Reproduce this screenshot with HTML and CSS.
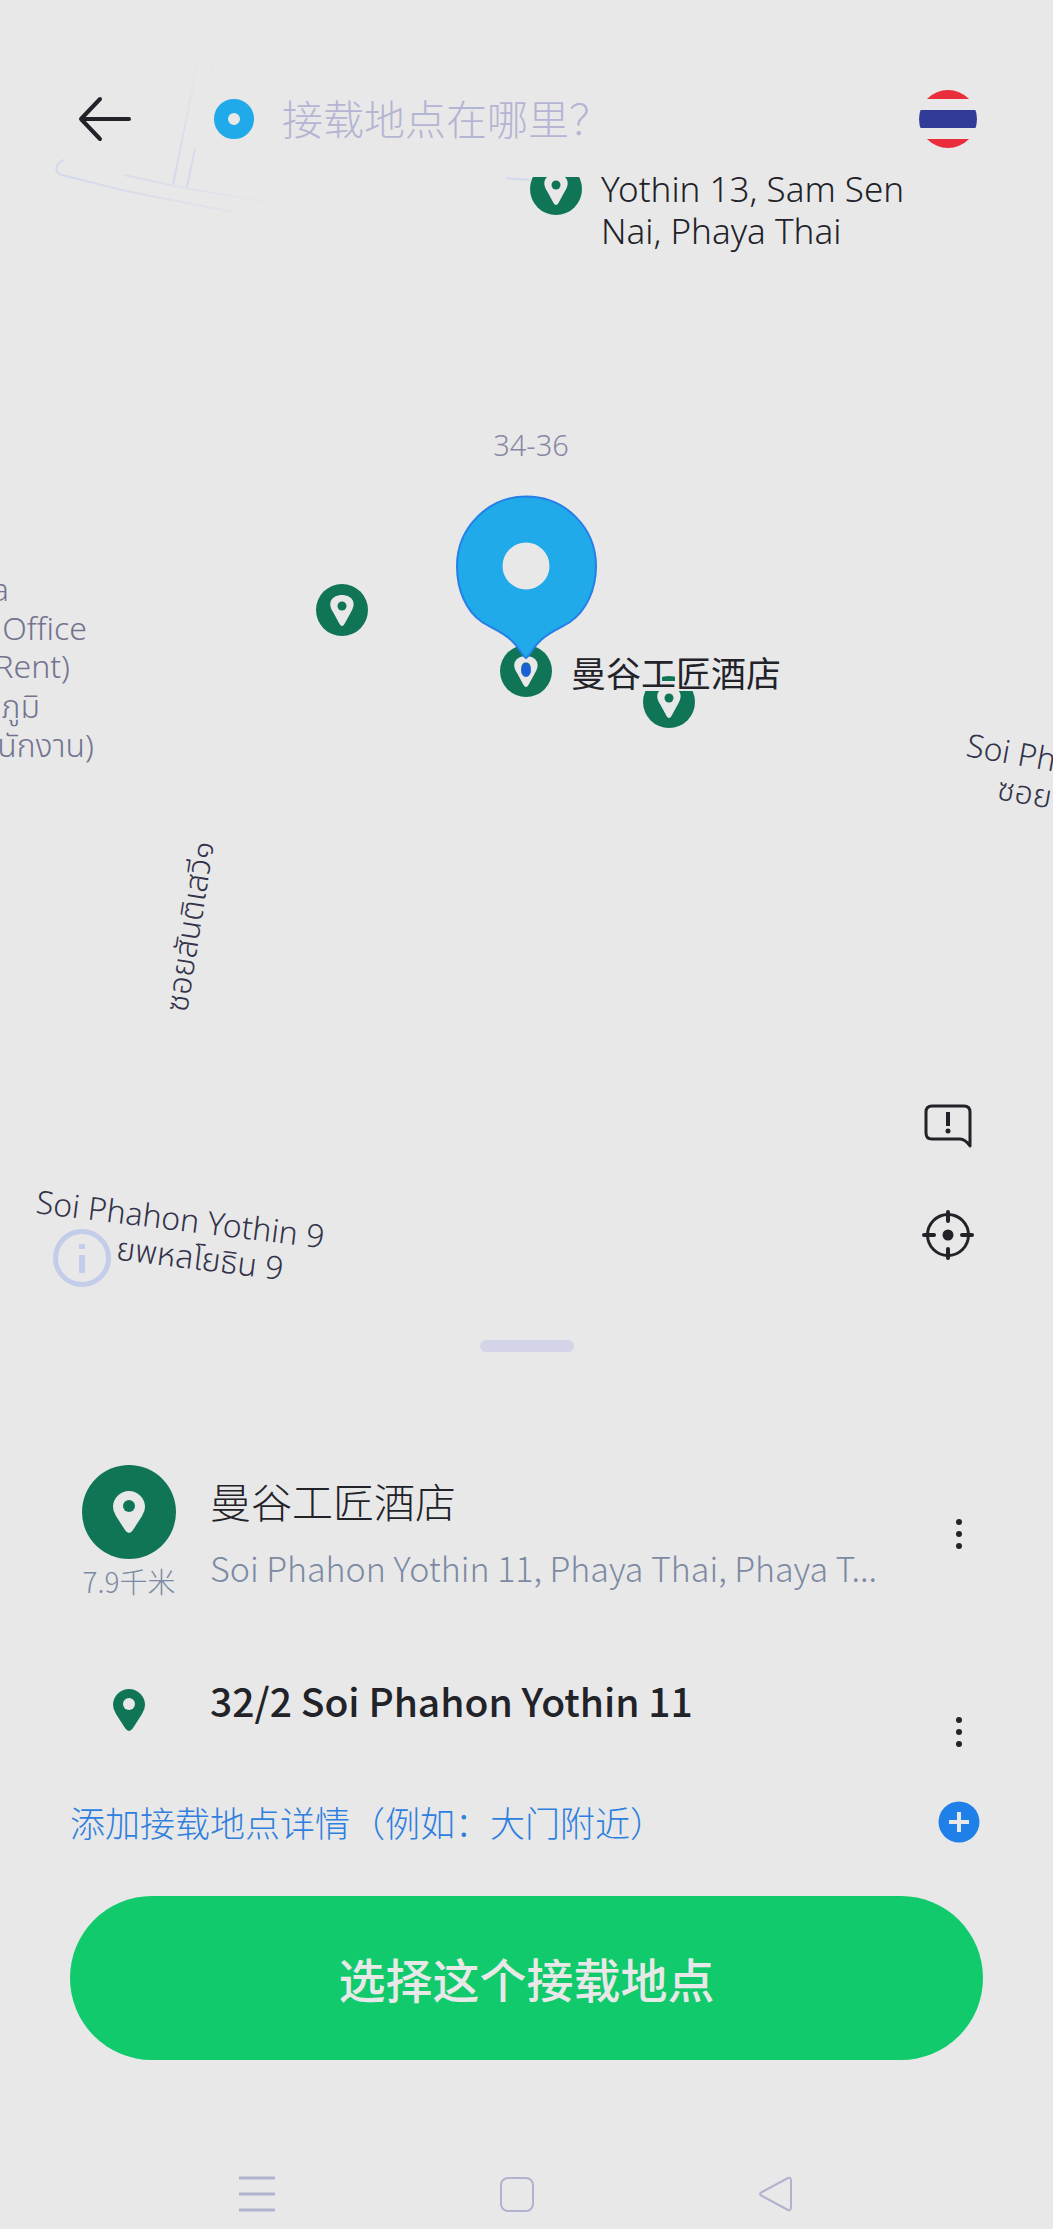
FILE: index.html
```html
<!DOCTYPE html>
<html lang="zh-CN">
<head>
  <meta charset="UTF-8">
  <meta name="viewport" content="width=device-width, initial-scale=1.0">
  <title>选择接载地点</title>
  <link rel="stylesheet" href="styles.css">
</head>
<body>

<section class="stage">
  <svg class="map" viewBox="0 0 1053 1300" preserveAspectRatio="xMidYMin slice">
    <defs>
      <g id="marker">
        <circle r="26" fill="#107556"/>
        <path d="M0 16C-1 16-2 15-3 13L-9 2C-16-9-8-15 0-15S16-9 9 2L3 13C2 15 1 16 0 16Z" fill="#e8e8e8"/>
        <circle cy="-4" r="4.500" fill="#107556"/>
      </g>
      <clipPath id="below-header"><rect x="0" y="177" width="1053" height="1123"/></clipPath>
      <clipPath id="below-label"><path d="M662 675h13v6h-13zM630 691h80v50h-80z"/></clipPath>
      <linearGradient id="fade" gradientUnits="userSpaceOnUse" x1="60" y1="0" x2="290" y2="0">
        <stop offset="0" stop-color="#d3d8ec"/>
        <stop offset="1" stop-color="#e8e8e8"/>
      </linearGradient>
      <linearGradient id="fade-up" gradientUnits="userSpaceOnUse" x1="0" y1="185" x2="0" y2="55">
        <stop offset="0" stop-color="#d3d8ec"/>
        <stop offset="1" stop-color="#e8e8e8"/>
      </linearGradient>
    </defs>

    <!-- roads -->
    <g class="roads">
      <path d="M198 56L194 80L173 185M195 148L187 187M214 57L211 71" stroke="url(#fade-up)"/>
      <path d="M64 160C56 162 53 173 62 175L126 191L233 212M124 175L180 187L320 212" stroke="url(#fade)"/>
      <path d="M506 178L530 180" stroke="#d3d8ec"/>
    </g>

    <g clip-path="url(#below-header)">
      <use href="#marker" x="556" y="189"/>
      <text class="place" x="601" y="202">Yothin 13, Sam Sen</text>
      <text class="place" x="601" y="244">Nai, Phaya Thai</text>
    </g>

    <text class="number" x="531" y="456" text-anchor="middle">34-36</text>

    <g class="area" text-anchor="end">
      <text x="9" y="601">a</text>
      <text x="87" y="640">Office</text>
      <text x="70" y="678">Rent)</text>
      <text x="40" y="718">ภูมิ</text>
      <text x="94" y="757">สำนักงาน)</text>
    </g>

    <g class="street">
      <text transform="translate(187 1013) rotate(-81)">ซอยสันติเสวี๑</text>
      <text transform="translate(35 1213) rotate(7)">Soi Phahon Yothin 9</text>
      <text transform="translate(282 1280) rotate(7)" text-anchor="end">ยพหลโยธิน 9</text>
      <text transform="translate(965 756) rotate(10)">Soi Phahon</text>
      <text transform="translate(996 799) rotate(10)">ซอยพหล</text>
    </g>

    <use href="#marker" x="342" y="610"/>
    <use href="#marker" x="526" y="671"/>
    <g clip-path="url(#below-label)"><use href="#marker" x="669" y="702"/></g>
    <text class="hotel" x="571" y="687">曼谷工匠酒店</text>

    <!-- pickup pin -->
    <ellipse cx="526" cy="670" rx="5" ry="7" fill="#1a62d2"/>
    <path d="M526 658C522 656 520 648 511 640C501 631 491 628 482 622C466 611 457 590 457 566A69.500 69.500 0 0 1 596 566C596 590 586 611 570 622C561 628 551 631 541 640C532 648 530 656 526 658Z" fill="#20aae9" stroke="#247fe8" stroke-width="2"/>
    <circle cx="526" cy="566" r="23.500" fill="#e8e8e8"/>
  </svg>

  <header class="topbar">
    <button class="icon-btn" aria-label="返回">
      <svg width="58" height="58" viewBox="0 0 58 58" fill="none" stroke="#222229" stroke-width="4" stroke-linecap="round" stroke-linejoin="round">
        <path d="M53 29H5M24 9L5 29L24 49"/>
      </svg>
    </button>
    <label class="search">
      <svg width="40" height="40" viewBox="0 0 40 40" aria-hidden="true">
        <circle cx="20" cy="20" r="13" fill="none" stroke="#20aae9" stroke-width="14"/>
      </svg>
      <input type="text" placeholder="接载地点在哪里？" aria-label="接载地点">
    </label>
    <button class="icon-btn" aria-label="泰国">
      <svg width="58" height="58" viewBox="0 0 58 58">
        <clipPath id="disc"><circle cx="29" cy="29" r="29"/></clipPath>
        <g clip-path="url(#disc)">
          <path d="M0 0h58v9H0zM0 49h58v9H0z" fill="#e92d3b"/>
          <path d="M0 20h58v18H0z" fill="#323c98"/>
        </g>
      </svg>
    </button>
  </header>

  <div class="map-controls">
    <button class="icon-btn" aria-label="信息">
      <svg width="58" height="58" viewBox="0 0 58 58" fill="#c3cdea">
        <circle cx="29" cy="29" r="26.500" fill="#e8e8e8" stroke="#c3cdea" stroke-width="5"/>
        <path d="M26 15h6v5h-6z"/>
        <rect x="26" y="26" width="6" height="18" rx="1"/>
      </svg>
    </button>
    <div class="map-tools">
      <button class="icon-btn" aria-label="报告问题">
        <svg width="52" height="52" viewBox="0 0 52 52" fill="none" stroke="#222229" stroke-width="3">
          <path d="M48 45V11Q48 5 42 5H10Q4 5 4 11V32Q4 38 10 38H38Q43 38 48 45Z" stroke-linejoin="round"/>
          <path d="M26 11V25" stroke-width="4"/>
          <circle cx="26" cy="30" r="2.500" fill="#222229" stroke="none"/>
        </svg>
      </button>
      <button class="icon-btn" aria-label="定位">
        <svg width="52" height="52" viewBox="0 0 52 52" fill="none" stroke="#222229" stroke-width="3" stroke-linecap="round">
          <circle cx="26" cy="26" r="20.500"/>
          <path d="M26 3V12M26 40V49M2 26H12M40 26H50" stroke-width="4"/>
          <circle cx="26" cy="26" r="5.500" fill="#222229" stroke="none"/>
        </svg>
      </button>
    </div>
  </div>
</section>

<main class="sheet">
  <div class="handle"></div>

  <div class="row">
    <div class="row-icon">
      <svg width="94" height="94" viewBox="0 0 94 94">
        <circle cx="47" cy="47" r="47" fill="#107556"/>
        <path d="M47 68Q45 68 43 65L34 51Q31 46 31 42A16 16 0 0 1 63 42Q63 46 60 51L51 65Q49 68 47 68Z" fill="#e8e8e8"/>
        <circle cx="47" cy="41" r="6" fill="#107556"/>
      </svg>
      <span class="distance">7.9千米</span>
    </div>
    <div class="row-text">
      <h1 class="name">曼谷工匠酒店</h1>
      <p class="address">Soi Phahon Yothin 11, Phaya Thai, Phaya T...</p>
    </div>
    <button class="icon-btn more" aria-label="更多">
      <svg width="48" height="48" viewBox="0 0 48 48" fill="#222229">
        <circle cx="24" cy="12" r="3"/><circle cx="24" cy="24" r="3"/><circle cx="24" cy="36" r="3"/>
      </svg>
    </button>
  </div>

  <div class="row row-sub">
    <div class="row-icon pin">
      <svg width="32" height="42" viewBox="0 0 32 42">
        <path d="M16 42Q14 42 12 39L3 25Q0 20 0 16A16 16 0 0 1 32 16Q32 20 29 25L20 39Q18 42 16 42Z" fill="#107556"/>
        <circle cx="16" cy="15" r="6" fill="#e8e8e8"/>
      </svg>
    </div>
    <h2 class="gate">32/2 Soi Phahon Yothin 11</h2>
    <button class="icon-btn more" aria-label="更多">
      <svg width="48" height="48" viewBox="0 0 48 48" fill="#222229">
        <circle cx="24" cy="12" r="3"/><circle cx="24" cy="24" r="3"/><circle cx="24" cy="36" r="3"/>
      </svg>
    </button>
  </div>

  <button class="add-note">
    添加接载地点详情（例如：大门附近）
    <svg width="42" height="42" viewBox="0 0 42 42">
      <circle cx="21" cy="21" r="20.500" fill="#1f80ea"/>
      <path d="M21 11V31M11 21H31" stroke="#e8e8e8" stroke-width="4"/>
    </svg>
  </button>

  <button class="confirm">选择这个接载地点</button>
</main>

<nav class="system-nav">
  <button class="icon-btn" aria-label="菜单">
    <svg width="36" height="36" viewBox="0 0 36 36" fill="none" stroke="#b1b2d0" stroke-width="3">
      <path d="M0 2H36M0 18H36M0 34H36"/>
    </svg>
  </button>
  <button class="icon-btn" aria-label="主页">
    <svg width="36" height="36" viewBox="0 0 36 36" fill="none" stroke="#b1b2d0" stroke-width="2">
      <rect x="2" y="2" width="32" height="33" rx="7"/>
    </svg>
  </button>
  <button class="icon-btn" aria-label="后退">
    <svg width="36" height="36" viewBox="0 0 36 36" fill="none" stroke="#b1b2d0" stroke-width="2" stroke-linejoin="round">
      <path d="M3 16L29 2Q32 1 32 5V31Q32 35 29 34L3 20Q-1 18 3 16Z"/>
    </svg>
  </button>
</nav>

</body>
</html>
```
FILE: styles.css
```css
* {
  box-sizing: border-box;
}

body {
  margin: 0;
  background-color: #e8e8e8;
  color: #222229;
  font-family: "Noto Sans CJK SC", "Noto Sans", sans-serif;
}

button {
  padding: 0;
  border: none;
  background: none;
  font-family: inherit;
  cursor: pointer;
}

svg {
  display: block;
}

/* Map */
.stage {
  position: relative;
  display: flex;
  flex-direction: column;
  min-height: 1300px;
  overflow: hidden;
}

.map {
  position: absolute;
  top: 0;
  left: 0;
  width: 100%;
  height: 100%;
  font-family: "Noto Sans", "Noto Sans Thai", sans-serif;
  font-weight: 300;
}

.roads {
  fill: none;
  stroke-width: 2;
}

.place {
  font-size: 35px;
  fill: #222229;
}

.number {
  font-size: 29px;
  fill: #8787a3;
}

.area {
  font-size: 32px;
  fill: #73748f;
}

.street {
  font-size: 32px;
  fill: #33334a;
}

.hotel {
  font-family: "Noto Sans CJK SC", sans-serif;
  font-size: 35px;
  font-weight: 400;
  fill: #222229;
}

/* Search bar */
.topbar {
  position: relative;
  display: flex;
  align-items: center;
  padding: 90px 76px 29px;
}

.search {
  display: flex;
  flex: 1;
  align-items: center;
  gap: 28px;
  margin-left: 80px;
}

.search input {
  flex: 1;
  min-width: 0;
  padding: 0 0 4px;
  border: none;
  outline: none;
  background: none;
  color: #222229;
  font-family: inherit;
  font-size: 41px;
  font-weight: 300;
  line-height: 54px;
}

.search input::placeholder {
  color: #b4b5d3;
  opacity: 1;
}

.map-controls {
  position: relative;
  display: flex;
  justify-content: space-between;
  align-items: flex-end;
  margin-top: auto;
  padding: 0 79px 13px 53px;
}

.map-tools {
  display: flex;
  flex-direction: column;
  gap: 56px;
  padding-bottom: 26px;
}

/* Bottom sheet */
.sheet {
  padding: 40px 70px 0;
}

.handle {
  width: 94px;
  height: 12px;
  margin: 0 auto 112px;
  border-radius: 6px;
  background-color: #d3d4e8;
}

.row {
  display: grid;
  grid-template-columns: 118px 1fr 48px;
  align-items: center;
}

.row-icon {
  display: flex;
  flex-direction: column;
  align-items: center;
}

.row-text {
  min-width: 0;
  padding: 0 22px 4px;
}

.distance {
  color: #7c8aa3;
  font-size: 28px;
  font-weight: 300;
  line-height: 44px;
  white-space: nowrap;
}

.name {
  margin: 0;
  font-size: 41px;
  font-weight: 300;
  line-height: 72px;
}

.address {
  margin: 0;
  overflow: hidden;
  color: #7c8aa3;
  font-size: 34px;
  font-weight: 300;
  line-height: 64px;
  text-overflow: ellipsis;
  white-space: nowrap;
}

.row-sub {
  align-items: start;
  margin-top: 70px;
}

.pin {
  padding-top: 15px;
}

.gate {
  margin: 0;
  padding: 0 22px;
  font-size: 39px;
  font-weight: 500;
  line-height: 52px;
}

.row-sub .more {
  padding: 34px 0;
}

.add-note {
  display: flex;
  justify-content: space-between;
  align-items: center;
  width: 100%;
  padding-right: 3px;
  color: #2f7fdf;
  font-size: 35px;
  font-weight: 300;
  line-height: 64px;
  text-align: left;
}

.confirm {
  width: 100%;
  margin-top: 42px;
  border-radius: 82px;
  background-color: #10ca6b;
  color: #e8e8e8;
  font-size: 47px;
  font-weight: 500;
  line-height: 164px;
}

/* System navigation */
.system-nav {
  display: flex;
  justify-content: center;
  gap: 224px;
  padding: 116px 20px 17px 0;
}
```
